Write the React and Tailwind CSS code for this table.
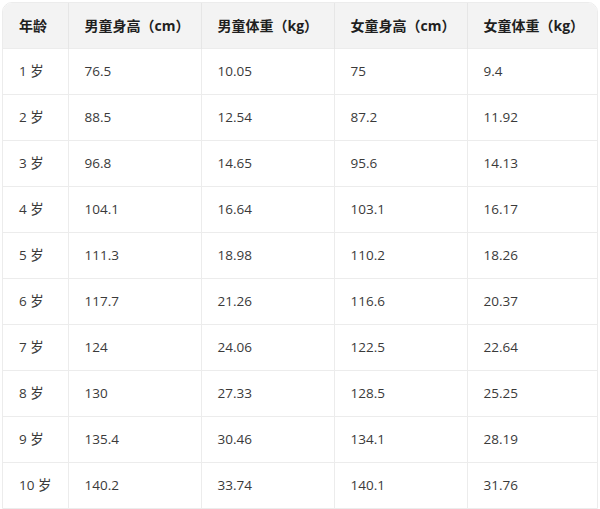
const HEADERS = ['年龄', '男童身高（cm）', '男童体重（kg）', '女童身高（cm）', '女童体重（kg）'];

const ROWS = [
  ['1 岁', '76.5', '10.05', '75', '9.4'],
  ['2 岁', '88.5', '12.54', '87.2', '11.92'],
  ['3 岁', '96.8', '14.65', '95.6', '14.13'],
  ['4 岁', '104.1', '16.64', '103.1', '16.17'],
  ['5 岁', '111.3', '18.98', '110.2', '18.26'],
  ['6 岁', '117.7', '21.26', '116.6', '20.37'],
  ['7 岁', '124', '24.06', '122.5', '22.64'],
  ['8 岁', '130', '27.33', '128.5', '25.25'],
  ['9 岁', '135.4', '30.46', '134.1', '28.19'],
  ['10 岁', '140.2', '33.74', '140.1', '31.76'],
];

const COL_WIDTHS = ['w-[65px]', 'w-[133px]', 'w-[133px]', 'w-[133px]', 'w-[131px]'];

export default function App() {
  return (
    <div
      className="w-[600px] h-[509px] bg-white pt-[2px] pl-[2px]"
      style={{ fontFamily: '"Open Sans", "Noto Sans CJK SC", sans-serif' }}
    >
      <div className="w-[596px] border border-[#ececec] rounded-t-[10px] overflow-hidden">
        <table className="w-full border-collapse table-fixed">
          <colgroup>
            {COL_WIDTHS.map((w, i) => (
              <col key={i} className={w} />
            ))}
          </colgroup>
          <thead>
            <tr className="h-[45px] bg-[#f3f3f3]">
              {HEADERS.map((h, i) => (
                <th
                  key={h}
                  className={`text-left font-bold text-[14px] text-[#1f1f1f] px-4 border-[#e6e6e6] ${i > 0 ? 'border-l' : ''}`}
                >
                  {h}
                </th>
              ))}
            </tr>
          </thead>
          <tbody>
            {ROWS.map((row) => (
              <tr key={row[0]} className="h-[46px] border-t border-[#ececec]">
                {row.map((cell, i) => (
                  <td
                    key={i}
                    className={`text-[13.5px] text-[#3a3a3a] px-4 border-[#ececec] ${i > 0 ? 'border-l' : ''}`}
                  >
                    {cell}
                  </td>
                ))}
              </tr>
            ))}
          </tbody>
        </table>
      </div>
    </div>
  );
}
